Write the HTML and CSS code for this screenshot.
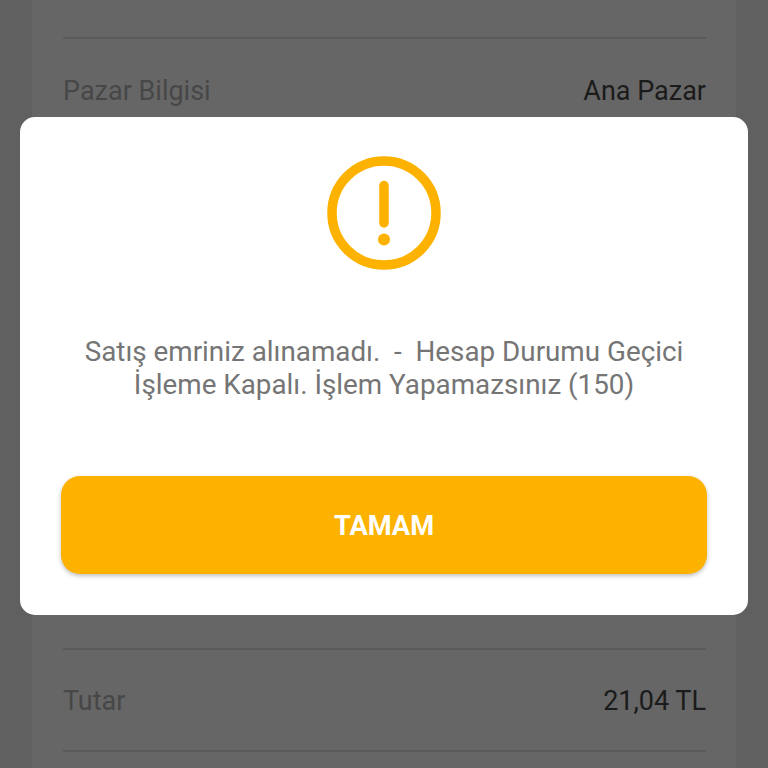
FILE: index.html
```
<!DOCTYPE html>
<html lang="tr">
<head>
<meta charset="utf-8">
<title>Emir</title>
<link rel="stylesheet" href="styles.css">
</head>
<body>
<main class="sheet">
  <div class="row row-first"><span class="label">Pazar Bilgisi</span><span class="value">Ana Pazar</span></div>
  <div class="row row-total"><span class="label">Tutar</span><span class="value">21,04 TL</span></div>
</main>
<div class="overlay">
  <section class="dialog" role="alertdialog">
    <svg class="icon" viewBox="0 0 114 114" fill="none" stroke="#fdb200" stroke-linecap="round">
      <circle cx="57" cy="57" r="52" stroke-width="9.5"/>
      <path d="M57 29.5V67" stroke-width="9.5"/>
      <circle cx="57" cy="83.5" r="6" fill="#fdb200" stroke="none"/>
    </svg>
    <p class="message"><span class="line">Satış emriniz alınamadı.&nbsp; -&nbsp; Hesap Durumu Geçici</span><span class="line">İşleme Kapalı. İşlem Yapamazsınız (150)</span></p>
    <button class="confirm">TAMAM</button>
  </section>
</div>
</body>
</html>
```

FILE: styles.css
```
* { box-sizing: border-box; }
body {
  margin: 0;
  height: 768px;
  overflow: hidden;
  background: #606060;
  font-family: Roboto, "Liberation Sans", sans-serif;
  font-size: 27px;
}
.sheet {
  height: 768px;
  margin: 0 32px;
  padding: 37px 30px 0 31px;
  background: #666;
}
.row {
  display: flex;
  justify-content: space-between;
  align-items: center;
  height: 103px;
  padding-top: 3px;
  border-top: 2px solid #5a5a5a;
}
.row-total {
  margin-top: 508px;
  height: 104px;
  padding-top: 2px;
  border-bottom: 2px solid #5a5a5a;
}
.label { color: #474747; }
.value { color: #1b1b1b; }
.overlay {
  position: absolute;
  inset: 0;
  padding: 117px 20px 0;
}
.dialog {
  display: flex;
  flex-direction: column;
  align-items: center;
  height: 498px;
  padding: 39px 41px 0;
  border-radius: 15px;
  background: #fff;
}
.icon { width: 114px; height: 114px; }
.message {
  margin: 65px 0 0;
  color: #757575;
  font-size: 27.8px;
  line-height: 33px;
  text-align: center;
  white-space: nowrap;
}
.line { display: block; }
.confirm {
  width: 646px;
  height: 98px;
  margin-top: 75px;
  padding: 2px 0 0;
  border: 0;
  border-radius: 19px;
  background: #fdb200;
  box-shadow: 0 2px 4px rgba(0, 0, 0, .25);
  color: #fff;
  font: 700 27.3px Roboto, sans-serif;
}
```
